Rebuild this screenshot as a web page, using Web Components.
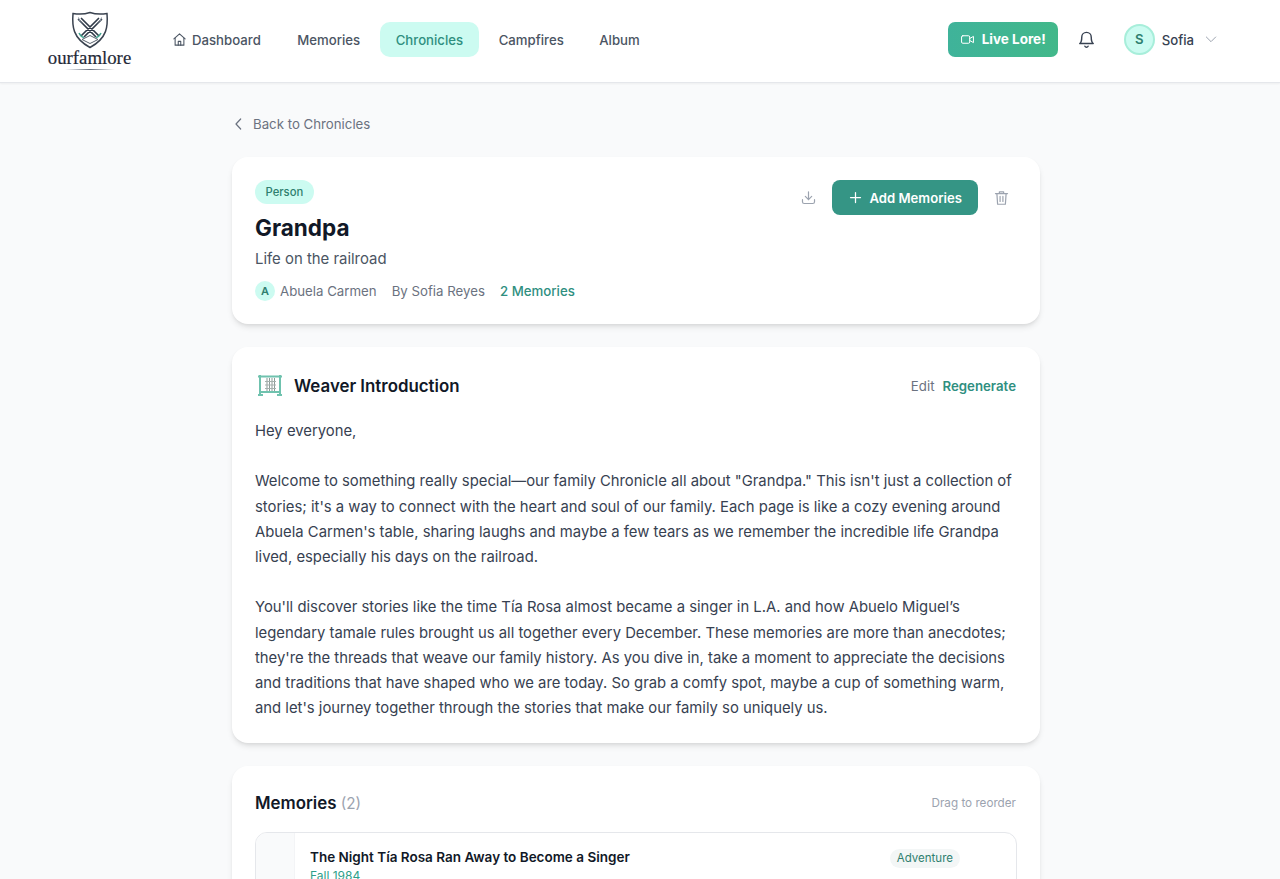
<!DOCTYPE html>
<html lang="en"><head><meta charset="utf-8"><title>Grandpa</title>
<style>
html,body{margin:0;height:879px;overflow:hidden;background:#f9fafb}
body{font-family:Inter,"Liberation Sans",sans-serif;color:#111827}
</style></head><body>
<app-nav></app-nav>
<page-main>
  <back-link>Back to Chronicles</back-link>
  <chronicle-header></chronicle-header>
  <weaver-intro>
    <p>Hey everyone,</p>
    <p>Welcome to something really special—our family Chronicle all about "Grandpa." This isn't just a collection of stories; it's a way to connect with the heart and soul of our family. Each page is like a cozy evening around Abuela Carmen's table, sharing laughs and maybe a few tears as we remember the incredible life Grandpa lived, especially his days on the railroad.</p>
    <p>You'll discover stories like the time Tía Rosa almost became a singer in L.A. and how Abuelo Miguel’s legendary tamale rules brought us all together every December. These memories are more than anecdotes; they're the threads that weave our family history. As you dive in, take a moment to appreciate the decisions and traditions that have shaped who we are today. So grab a comfy spot, maybe a cup of something warm, and let's journey together through the stories that make our family so uniquely us.</p>
  </weaver-intro>
  <memories-card>
    <memory-row title="The Night Tía Rosa Ran Away to Become a Singer" date="Fall 1984" tag="Adventure"></memory-row>
  </memories-card>
</page-main>
<script>
function el(name, html){
  customElements.define(name, class extends HTMLElement{
    constructor(){super();this.attachShadow({mode:'open'}).innerHTML=html;}
  });
}
const ico=(s,b,extra='')=>`<svg width="${s}" height="${s}" viewBox="0 0 24 24" fill="none" stroke="currentColor" stroke-width="${b}" stroke-linecap="round" stroke-linejoin="round" ${extra}>`;
el('app-nav',`<style>
:host{display:flex;align-items:center;height:82px;background:#fff;border-bottom:1px solid #e5e7eb;box-shadow:0 1px 2px rgba(0,0,0,.05);box-sizing:content-box;padding:0 48px;font-size:13.200px;font-weight:500;color:#4b5563;position:relative}
.inner{display:flex;align-items:center;flex:1;margin-top:-3px}
.logo{display:flex;flex-direction:column;align-items:center;width:83px;flex:none;margin-top:2px}
.logo span{font:400 18.800px/1 "Liberation Serif",serif;color:#1f2937;-webkit-text-stroke:.2px #1f2937}
.logo i{display:block;width:50px;height:1px;margin-top:2px;background:linear-gradient(90deg,transparent,#6b7280,transparent)}
nav{display:flex;align-items:center;margin-left:23px;gap:4.500px}
a{display:flex;align-items:center;gap:5px;height:35px;box-sizing:border-box;padding:1px 15.500px 0;border-radius:10px;white-space:nowrap}
a.first{padding-left:18px;padding-right:16.500px}
a.on{background:#ccfbf1;color:#2f8f7f}
.right{margin-left:auto;display:flex;align-items:center}
.live{display:flex;align-items:center;gap:7px;height:35px;width:110px;box-sizing:border-box;padding-left:12px;border-radius:7px;background:linear-gradient(90deg,#3fb39a,#42b88a);color:#fff;font-weight:700;font-size:13.500px}
.bell{margin-left:19.500px;color:#374151;display:flex}
.av{margin-left:27.500px;width:31px;height:31px;box-sizing:border-box;border-radius:50%;background:#ccfbf1;border:2px solid #a7eeda;color:#2f7f6f;display:flex;align-items:center;justify-content:center;font-size:13.125px;font-weight:600}
.name{margin-left:7px;color:#374151;padding-top:1px}
.chev{margin-left:9px;color:#9ca3af;display:flex;margin-right:13px}
</style>
<div class="inner">
<div class="logo">
<svg width="38" height="38" viewBox="0 0 38 38" fill="none">
<path d="M19 1.500C24 3.200 30 3.500 36 2.500C37 15 36.500 27 19 36.500C1.500 27 1 15 2 2.500C8 3.500 14 3.200 19 1.500Z" stroke="#3a4350" stroke-width="1.500"/>
<path d="M7.500 8.500L24.500 25.500M10.500 7.500L27.500 24.500M30.500 8.500L13.500 25.500M27.500 7.500L10.500 24.500" stroke="#2f3a48" stroke-width="1.700" stroke-linecap="round"/>
<path d="M30.500 6.500Q29.500 11 26.500 13.500M7.500 6.500Q8.500 11 11.500 13.500" stroke="#8a949f" stroke-width="1"/>
<path d="M8 22Q10 26 13 26.500M30 22Q28 26 25 26.500" stroke="#46a893" stroke-width="1.500"/>
<path d="M11 28.500L19 24.500L27 28.500L19 32.500Z" stroke="#59626e" stroke-width="1"/>
</svg>
<span>ourfamlore</span><i></i></div>
<nav>
<a class="first">${ico(15,1.7)}<path d="M3 11l9-8 9 8"/><path d="M5 9.500V21h14V9.500"/><path d="M10 21v-6h4v6"/></svg>Dashboard</a>
<a>Memories</a><a class="on">Chronicles</a><a>Campfires</a><a>Album</a>
</nav>
<div class="right">
<div class="live">${ico(15,1.6)}<rect x="2.500" y="6" width="13" height="12" rx="2"/><path d="M15.500 10.500L21.500 7v10l-6-3.500"/></svg>Live Lore!</div>
<div class="bell">${ico(19,1.8)}<path d="M18 9a6 6 0 0 0-12 0c0 6-2.500 8-2.500 8h17S18 15 18 9"/><path d="M10 20.500a2.200 2.200 0 0 0 4 0"/></svg></div>
<div class="av">S</div><div class="name">Sofia</div>
<div class="chev">${ico(16,1.500)}<path d="M5 9l7 7 7-7"/></svg></div>
</div>
</div>`);
el('page-main',`<style>:host{display:block;width:808px;margin-left:232px;padding-top:32px}
::slotted(*){margin-bottom:23px}</style><slot></slot>`);
el('back-link',`<style>:host{display:flex;align-items:center;gap:6px;height:18px;font-size:13.250px;color:#6b7280;margin-bottom:24px !important}svg{margin-left:-1px}</style>
${ico(16,1.8)}<path d="M14.500 4.500L7.500 12l7 7.500"/></svg><slot></slot>`);
const cardCss=`:host{display:block;background:#fff;border-radius:16px;box-shadow:0 4px 6px -1px rgba(0,0,0,.1),0 2px 4px -2px rgba(0,0,0,.1);box-sizing:border-box;padding:23px}`;
el('chronicle-header',`<style>${cardCss}
:host{height:167px;display:flex;justify-content:space-between}
.pill{display:block;width:fit-content;background:#ccfbf1;color:#2f7f6f;font-size:11.250px;font-weight:500;height:23.500px;line-height:25px;padding:0 10.500px;border-radius:12px}
h1{margin:6px 0 0;font-size:22.500px;line-height:36px;font-weight:700;color:#111827}
.sub{font-size:14.900px;line-height:24px;color:#4b5563;margin-top:1px}
.meta{display:flex;align-items:center;font-size:13.250px;color:#6b7280;margin-top:9px;height:22px}
.a{width:20px;height:20px;border-radius:50%;background:#ccfbf1;color:#2f7f6f;font-size:11px;font-weight:600;display:flex;align-items:center;justify-content:center;margin-right:5px}
.by{margin-left:15px}.cnt{margin-left:15px;color:#2f8f7f;font-weight:500}
.acts{display:flex;align-items:center;height:35px;color:#9ca3af;margin-right:7.500px}
.btn{display:flex;align-items:center;gap:7px;height:35px;width:146px;box-sizing:border-box;padding-left:16px;background:#359585;color:#fff;border-radius:8px;font-size:13.125px;font-weight:600;margin:0 15px}
.acts svg{display:block}
.acts>svg:first-child{margin-right:-1px;position:relative;left:-1px}
</style>
<div>
<span class="pill">Person</span>
<h1>Grandpa</h1>
<div class="sub">Life on the railroad</div>
<div class="meta"><span class="a">A</span>Abuela Carmen<span class="by">By Sofia Reyes</span><span class="cnt">2 Memories</span></div>
</div>
<div class="acts">
${ico(17,1.7)}<path d="M12 4v11M7.500 10.500L12 15l4.500-4.500"/><path d="M3.500 15v3a2.500 2.500 0 0 0 2.500 2.500h12a2.500 2.500 0 0 0 2.500-2.500v-3"/></svg>
<div class="btn">${ico(15,2)}<path d="M12 4v16M4 12h16"/></svg>Add Memories</div>
${ico(17,1.7)}<path d="M3.500 6.500h17"/><path d="M9 6V4h6v2"/><path d="M5.500 6.500l1 15h11l1-15"/><path d="M10 10.500v7M14 10.500v7"/></svg>
</div>`);
el('weaver-intro',`<style>${cardCss}
:host{height:396px}
.h{display:flex;align-items:center;height:32px}
h2{margin:0 0 0 11px;font-size:16.875px;font-weight:600;color:#111827}
.e{margin-left:auto;font-size:13.250px;color:#6b7280}
.r{margin-left:8px;font-size:13.250px;font-weight:600;color:#2f8f7f;margin-right:1px}
.b{margin-top:17px;font-size:14.840px;line-height:25.250px;color:#374151}
::slotted(p){margin:0 0 25px}
</style>
<div class="h">
<svg width="28" height="24" viewBox="0 0 28 24" fill="none" stroke="#6fc2ae" stroke-width="2" style="margin-top:-2px">
<path d="M5 2v20M25 2v20M3 3.500h24M5 19h20M3 22h5M22 22h5"/>
<path d="M12 5v13M14.500 5v13M17 5v13M19.500 5v13" stroke="#8d9a97" stroke-width="1"/>
<path d="M10 8.500h11M10 12h11M10 15.500h11" stroke="#a5b0ad" stroke-width="1.200"/>
</svg>
<h2>Weaver Introduction</h2><span class="e">Edit</span><span class="r">Regenerate</span></div>
<div class="b"><slot></slot></div>`);
el('memories-card',`<style>${cardCss}
:host{margin-bottom:0 !important}
.h{display:flex;align-items:center;justify-content:space-between;height:28px}
h2{margin:0;font-size:16.875px;font-weight:600;color:#111827}
h2 span{font-weight:400;color:#9ca3af;font-size:15.250px}
.d{font-size:11.700px;color:#9ca3af;margin-right:1px}
.list{margin-top:15px}
</style>
<div class="h"><h2>Memories <span>(2)</span></h2><span class="d">Drag to reorder</span></div>
<div class="list"><slot></slot></div>`);
customElements.define('memory-row',class extends HTMLElement{
  constructor(){super();this.attachShadow({mode:'open'});}
  connectedCallback(){this.shadowRoot.innerHTML=`<style>
:host{display:flex;height:120px;border:1px solid #e5e7eb;border-radius:12px;overflow:hidden}
.grip{width:38px;background:#f9fafb;border-right:1px solid #f3f4f6;flex:none}
.c{flex:1;padding:14px 15px;display:flex;justify-content:space-between;align-items:flex-start}
.t{font-size:13.500px;font-weight:600;color:#111827;line-height:20px}
.dt{font-size:12px;color:#2f9f8a;line-height:17px}
.tag{font-size:11.500px;color:#2f7f6f;background:#f3f6f6;height:19px;line-height:19px;padding:0 7px;border-radius:10px;margin:2px 41px 0 0}
</style><div class="grip"></div><div class="c"><div><div class="t">${this.getAttribute('title')}</div><div class="dt">${this.getAttribute('date')}</div></div><span class="tag">${this.getAttribute('tag')}</span></div>`;}
});
</script>
</body></html>
